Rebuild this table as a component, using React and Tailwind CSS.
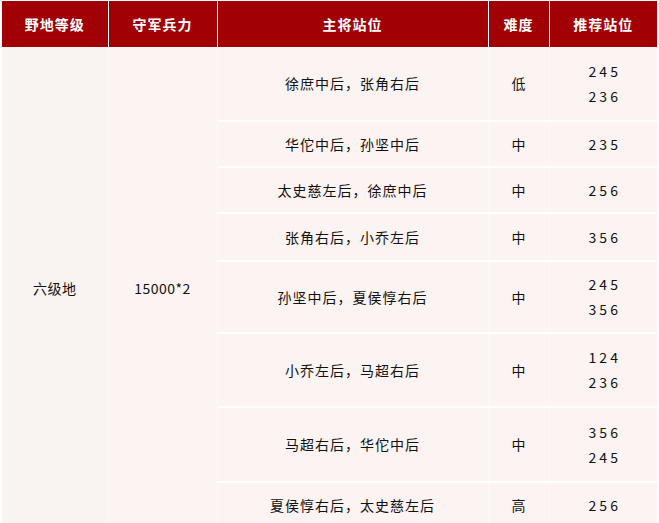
import React from "react";

const rows = [
  { who: "徐庶中后，张角右后", level: "低", pos: ["245", "236"], h: "h-[74px]" },
  { who: "华佗中后，孙坚中后", level: "中", pos: ["235"], h: "h-[46px]" },
  { who: "太史慈左后，徐庶中后", level: "中", pos: ["256"], h: "h-[46px]" },
  { who: "张角右后，小乔左后", level: "中", pos: ["356"], h: "h-[48px]" },
  { who: "孙坚中后，夏侯惇右后", level: "中", pos: ["245", "356"], h: "h-[72px]" },
  { who: "小乔左后，马超右后", level: "中", pos: ["124", "236"], h: "h-[74px]" },
  { who: "马超右后，华佗中后", level: "中", pos: ["356", "245"], h: "h-[75px]" },
  { who: "夏侯惇右后，太史慈左后", level: "高", pos: ["256"], h: "h-[47px]" },
];

const font = { fontFamily: '"Noto Sans CJK SC", "Liberation Sans", sans-serif' };

function App() {
  return (
    <div className="w-[659px] h-[523px] overflow-hidden bg-white px-[2px] pt-[1px]" style={font}>
      <table className="w-[655px] table-fixed border-collapse text-center text-[14px] text-[#111]">
        <colgroup>
          <col className="w-[106px]" />
          <col className="w-[109px]" />
          <col className="w-[271px]" />
          <col className="w-[61px]" />
          <col className="w-[108px]" />
        </colgroup>
        <thead>
          <tr className="h-[46px] bg-[#a10004] text-white font-bold tracking-[1px]">
            <th className="border-r border-white">野地等级</th>
            <th className="border-r border-white">守军兵力</th>
            <th className="border-r border-white">主将站位</th>
            <th className="border-r border-white">难度</th>
            <th>推荐站位</th>
          </tr>
        </thead>
        <tbody className="bg-[#fcf3f3]">
          {rows.map((row, index) => (
            <tr key={index} className={row.h}>
              {index === 0 && (
                <>
                  <td rowSpan={rows.length} className="bg-[#f9f3f2] border-r border-[#fdf8f8] tracking-[0.5px]">
                    六级地
                  </td>
                  <td rowSpan={rows.length} className="border-r border-[#fdf8f8] tracking-[0.5px]">
                    15000*2
                  </td>
                </>
              )}
              <td className="border-b-2 border-r border-b-white border-r-[#fdf8f8] tracking-[1px]">
                {row.who}
              </td>
              <td className="border-b-2 border-r border-b-white border-r-[#fdf8f8]">
                {row.level}
              </td>
              <td className="border-b-2 border-b-white tracking-[3px] leading-[25px]">
                {row.pos.map((p) => (
                  <div key={p} className="pl-[3px]">{p}</div>
                ))}
              </td>
            </tr>
          ))}
        </tbody>
      </table>
    </div>
  );
}

export default App;
